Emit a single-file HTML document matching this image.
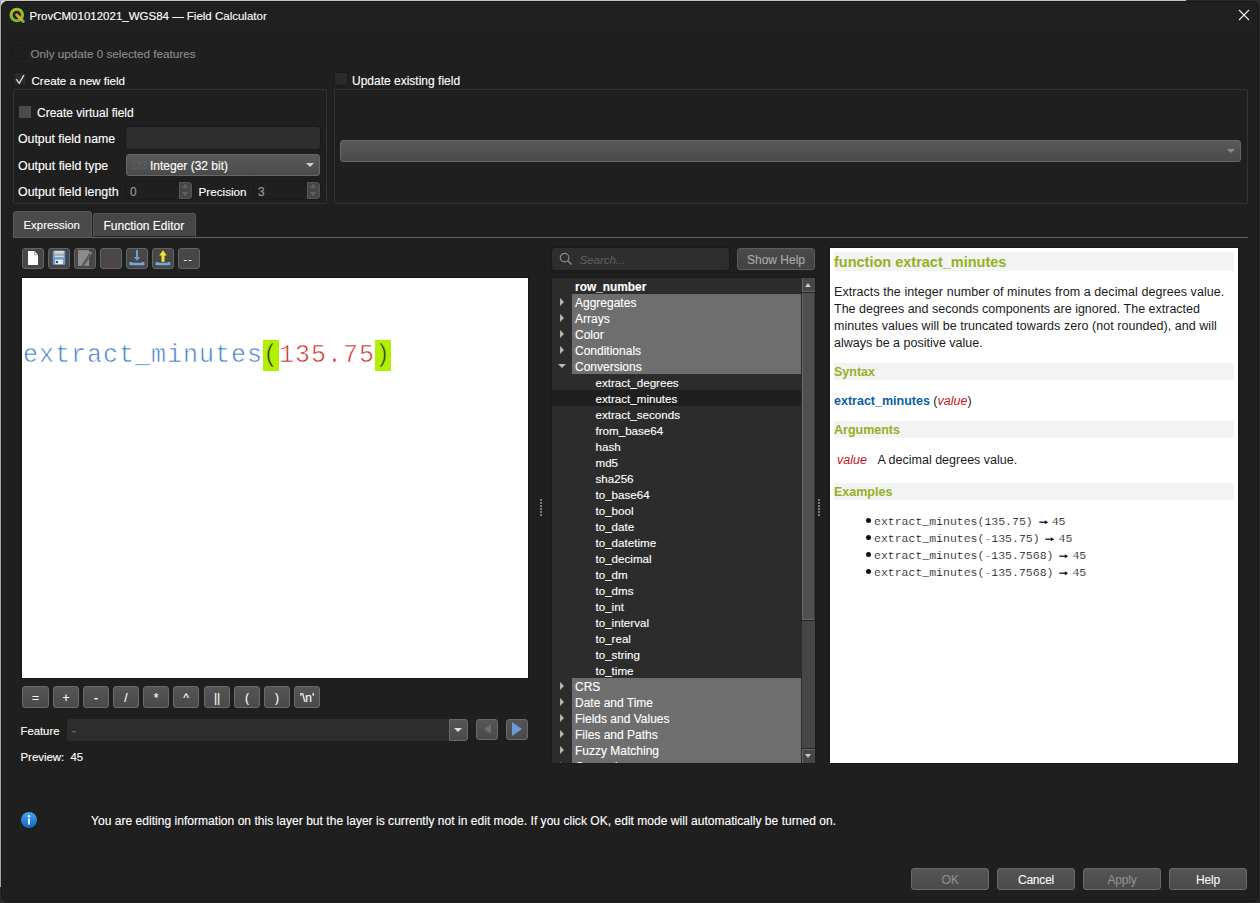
<!DOCTYPE html><html><head><meta charset="utf-8"><style>*{box-sizing:border-box;margin:0;padding:0}
html,body{width:1260px;height:903px;overflow:hidden;background:#2a2a2a}
body{position:relative;font-family:"Liberation Sans",sans-serif;font-size:12px;color:#fff}
.a{position:absolute}
.t{position:absolute;white-space:pre;line-height:16px;height:16px;-webkit-text-stroke-width:0.12px}
#win{position:absolute;left:1px;top:1px;width:1258px;height:901px;background:#1f1f1f;border-radius:7px;box-shadow:inset 0 0 0 1px #171717}
.cb{position:absolute;width:12px;height:12px;background:#2a2a2a;box-shadow:0 0 0 1px #1a1a1a}
.grp{position:absolute;border:1px solid #333;border-radius:2px}
.inp{position:absolute;background:#2e2e2e;border-radius:3px;box-shadow:0 0 0 1px #1a1a1a}
.combo{position:absolute;background:linear-gradient(#5a5a5a,#4a4a4a);border:1px solid #666;border-radius:3px}
.btn{position:absolute;background:linear-gradient(#555,#4a4a4a);border:1px solid #6a6a6a;border-radius:3px;text-align:center;color:#fff;white-space:pre;-webkit-text-stroke-width:0.12px}
.tb{position:absolute;top:248px;width:22px;height:21px;background:#474747;border:1px solid #646464;border-radius:3px}
.ht{position:absolute;white-space:pre;font-size:12.5px;line-height:17px;height:17px;color:#1a1a1a}
.hh{position:absolute;left:834px;width:400px;background:#f3f3f3}
.code{font-family:"Liberation Mono",monospace}
</style></head><body>
<div class="a" style="left:0;top:0;width:14px;height:14px;background:#cfcfcf"></div>
<div id="win"></div>
<div class="a" style="left:8px;top:2px;width:1244px;height:29px;background:#202020"></div>
<div class="a" style="left:0;top:0;width:1186px;height:1px;background:#c4c4c4"></div>
<div class="a" style="left:0;top:0;width:1px;height:887px;background:#a6a6a6"></div>
<svg class="a" style="left:0px;top:0px" width="30" height="30" viewBox="0 0 30 30"><defs><linearGradient id="lg1" x1="16" y1="14.4" x2="24" y2="22.4" gradientUnits="userSpaceOnUse"><stop offset="0" stop-color="#f7801c"/><stop offset="0.4" stop-color="#d9b23a"/><stop offset="1" stop-color="#68b03c"/></linearGradient><linearGradient id="lg2" x1="0" y1="0" x2="0" y2="1"><stop offset="0" stop-color="#9cc426"/><stop offset="1" stop-color="#7db32a"/></linearGradient></defs><circle cx="16.8" cy="15" r="5.7" fill="none" stroke="url(#lg2)" stroke-width="3.1"/><path d="M16.6 14.8L23.2 21.4" stroke="url(#lg1)" stroke-width="3" stroke-linecap="round"/></svg>

<div class="t" style="left:29.6px;top:8px;font-size:11.5px;color:#fff">ProvCM01012021_WGS84 — Field Calculator</div>
<svg class="a" style="left:1238px;top:9px" width="12" height="12" viewBox="0 0 12 12"><path d="M1 1L11 11M11 1L1 11" stroke="#f0f0f0" stroke-width="1.1"/></svg>
<div class="cb" style="left:13px;top:46px;background:#1f1f1f;box-shadow:0 0 0 1px #191919"></div>
<div class="t" style="left:30.5px;top:46px;color:#8c8c8c;font-size:11.7px">Only update 0 selected features</div>
<div class="cb" style="left:14px;top:73px"></div>
<svg class="a" style="left:14px;top:73px" width="12" height="12" viewBox="0 0 12 12"><path d="M2.3 6.2L5.2 10.3L9.9 2.2" fill="none" stroke="#dcdcdc" stroke-width="1.3"/></svg>
<div class="t" style="left:31.5px;top:73px;font-size:11.6px">Create a new field</div>
<div class="cb" style="left:335px;top:73px"></div>
<div class="t" style="left:352px;top:73px;">Update existing field</div>
<div class="grp" style="left:13px;top:89px;width:314px;height:115px"></div>
<div class="grp" style="left:334px;top:89px;width:914px;height:115px"></div>
<div class="cb" style="left:19px;top:106px;background:#4a4a4a;box-shadow:none"></div>
<div class="t" style="left:37px;top:105px;">Create virtual field</div>
<div class="t" style="left:18px;top:131px;font-size:12.3px">Output field name</div>
<div class="t" style="left:18px;top:158px;font-size:12.4px">Output field type</div>
<div class="t" style="left:18px;top:184px;font-size:12.4px">Output field length</div>
<div class="inp" style="left:126px;top:127px;width:194px;height:22px"></div>
<div class="combo" style="left:126px;top:154px;width:194px;height:22px"></div>
<div class="t" style="left:131px;top:157.5px;font-size:10px;color:#606060;letter-spacing:-0.2px">123</div>
<div class="t" style="left:150px;top:158px;">Integer (32 bit)</div>
<div class="a" style="left:305.5px;top:163px;width:0;height:0;border-left:4px solid transparent;border-right:4px solid transparent;border-top:4px solid #d0d0d0"></div>
<div class="inp" style="left:126px;top:182px;width:66px;height:17px;background:#1f1f1f"></div>
<div class="a" style="left:179px;top:182px;width:13px;height:17px;background:#474747;border:1px solid #565656;border-radius:0 3px 3px 0"></div>
<div class="a" style="left:182px;top:184px;width:0;height:0;border-left:3.5px solid transparent;border-right:3.5px solid transparent;border-bottom:4px solid #626262"></div>
<div class="a" style="left:182px;top:192px;width:0;height:0;border-left:3.5px solid transparent;border-right:3.5px solid transparent;border-top:4px solid #626262"></div>
<div class="t" style="left:130px;top:184px;color:#9a9a9a">0</div>
<div class="inp" style="left:254px;top:182px;width:66px;height:17px;background:#1f1f1f"></div>
<div class="a" style="left:307px;top:182px;width:13px;height:17px;background:#474747;border:1px solid #565656;border-radius:0 3px 3px 0"></div>
<div class="a" style="left:310px;top:184px;width:0;height:0;border-left:3.5px solid transparent;border-right:3.5px solid transparent;border-bottom:4px solid #626262"></div>
<div class="a" style="left:310px;top:192px;width:0;height:0;border-left:3.5px solid transparent;border-right:3.5px solid transparent;border-top:4px solid #626262"></div>
<div class="t" style="left:258px;top:184px;color:#9a9a9a">3</div>
<div class="t" style="left:198.5px;top:184px;font-size:11.7px">Precision</div>
<div class="combo" style="left:340px;top:140px;width:901px;height:22px"></div>
<div class="a" style="left:1226.5px;top:149px;width:0;height:0;border-left:4px solid transparent;border-right:4px solid transparent;border-top:4px solid #8a8a8a"></div>
<div class="a" style="left:13px;top:237px;width:1235px;height:1px;background:#646464"></div>
<div class="a" style="left:13px;top:211px;width:79px;height:27px;background:#4a4a4a;border:1px solid #5a5a5a;border-radius:3px 3px 1px 1px"></div>
<div class="a" style="left:93px;top:213px;width:103px;height:24px;background:#464646;border:1px solid #555;border-bottom:1px solid #222;border-radius:3px 3px 0 0"></div>
<div class="t" style="left:23.5px;top:217px;font-size:11.4px">Expression</div>
<div class="t" style="left:103.5px;top:218px;">Function Editor</div>
<div class="tb" style="left:22px"></div>
<div class="tb" style="left:48px"></div>
<div class="tb" style="left:74px"></div>
<div class="tb" style="left:100px"></div>
<div class="tb" style="left:126px"></div>
<div class="tb" style="left:152px"></div>
<div class="tb" style="left:178px"></div>
<svg class="a" style="left:22px;top:248px" width="180" height="22" viewBox="0 0 180 22">
<path d="M6 3H12.4L16 6.8V17H6Z" fill="#fbfbfb"/><path d="M12.4 3.3V6.8H15.8" fill="#d0d0d0" stroke="#9a9a9a" stroke-width="0.6"/>
<rect x="30.8" y="2.7" width="12.4" height="14.1" rx="0.6" fill="#6b9bd5"/>
<rect x="32.5" y="2.9" width="9.2" height="6.2" fill="#b0b0b0"/><rect x="32.5" y="2.9" width="9.2" height="2.5" fill="#d6d6d6"/><rect x="32.5" y="8.3" width="9.2" height="0.8" fill="#e8e8e8"/>
<rect x="33.1" y="11.6" width="7.8" height="4.6" fill="#eeeeee"/><rect x="33.9" y="13" width="2.1" height="2.1" fill="#264a78"/>
<rect x="56" y="2.1" width="11.1" height="15.7" fill="#8c8c8c"/>
<path d="M61.2 17.2L68.6 5.2" stroke="#5e5e58" stroke-width="2.8" stroke-linecap="round"/><path d="M67.2 4.2L69.6 5.6" stroke="#a0a09a" stroke-width="1.2"/>
<path d="M83.8 5.8H93.8M84.8 7.4H93V16.8H84.8ZM87.1 9V15.5M89 9V15.5M90.9 9V15.5M86.5 5.8L87.5 3.6H90.3L91.2 5.8" fill="none" stroke="#5e4242" stroke-width="0.9"/>
<path d="M115 2.2V9.5" stroke="#6e9fd4" stroke-width="2"/><path d="M111.8 9L115 12.7L118.2 9Z" fill="#6e9fd4"/>
<path d="M107.4 13.9H110.3V14.8H119.5V13.9H122.4V17.2H107.4Z" fill="#78a5d8"/>
<path d="M141 6.5V13.8" stroke="#efe82c" stroke-width="3"/><path d="M137.2 7.4L141 2.3L144.8 7.4Z" fill="#efe82c"/>
<path d="M133.6 13.9H136.5V14.8H145.5V13.9H148.4V17.2H133.6Z" fill="#78a5d8"/>
<path d="M161.8 12.5H164.8M166.6 12.5H169.6" stroke="#f0f0f0" stroke-width="1.2"/>
</svg>

<div class="a" style="left:22px;top:278px;width:506px;height:400px;background:#fff;box-shadow:0 0 0 1px #151515"></div>
<div class="a" style="left:262.5px;top:340px;width:16px;height:31px;background:#b1f000"></div>
<div class="a" style="left:374.5px;top:340px;width:16px;height:31px;background:#b1f000"></div>
<div class="t code" style="left:23px;top:340px;font-size:25px;letter-spacing:1px;line-height:31px;height:31px"><span style="color:#3f7cc4;-webkit-text-stroke:0.6px #fff">extract_minutes</span><span style="color:#333;-webkit-text-stroke:0.6px #b1f000">(</span><span style="color:#cc2a2a;-webkit-text-stroke:0.6px #fff">135.75</span><span style="color:#333;-webkit-text-stroke:0.6px #b1f000">)</span></div>
<div class="btn" style="left:22px;top:686px;width:27px;height:22px;line-height:22px">=</div>
<div class="btn" style="left:53px;top:686px;width:26px;height:22px;line-height:22px">+</div>
<div class="btn" style="left:83px;top:686px;width:26px;height:22px;line-height:22px">-</div>
<div class="btn" style="left:113px;top:686px;width:26px;height:22px;line-height:22px">/</div>
<div class="btn" style="left:143px;top:686px;width:26px;height:22px;line-height:22px">*</div>
<div class="btn" style="left:173px;top:686px;width:26px;height:22px;line-height:22px">^</div>
<div class="btn" style="left:204px;top:686px;width:26px;height:22px;line-height:22px">||</div>
<div class="btn" style="left:234px;top:686px;width:26px;height:22px;line-height:22px">(</div>
<div class="btn" style="left:264px;top:686px;width:26px;height:22px;line-height:22px">)</div>
<div class="btn" style="left:294px;top:686px;width:26px;height:22px;line-height:22px">'\n'</div>
<div class="t" style="left:20.5px;top:723px;font-size:11.3px">Feature</div>
<div class="a" style="left:67px;top:719px;width:382px;height:22px;background:#2d2d2d;border-radius:3px 0 0 3px"></div>
<div class="t" style="left:72px;top:723px;color:#777">-</div>
<div class="btn" style="left:449px;top:719px;width:19px;height:22px;border-radius:0 3px 3px 0"></div>
<div class="a" style="left:454px;top:728px;width:0;height:0;border-left:4px solid transparent;border-right:4px solid transparent;border-top:4px solid #e0e0e0"></div>
<div class="btn" style="left:476px;top:719px;width:22px;height:21px"></div>
<div class="a" style="left:484px;top:724px;width:0;height:0;border-top:5.5px solid transparent;border-bottom:5.5px solid transparent;border-right:7px solid #6b6e72"></div>
<div class="btn" style="left:506px;top:719px;width:22px;height:21px"></div>
<div class="a" style="left:512px;top:722px;width:0;height:0;border-top:7px solid transparent;border-bottom:7px solid transparent;border-left:10px solid #6a9bd6"></div>
<div class="t" style="left:20.5px;top:749px;font-size:11.4px">Preview:  45</div>
<div class="a" style="left:540px;top:499px;width:2px;height:2px;background:#7a7a7a"></div>
<div class="a" style="left:540px;top:502px;width:2px;height:2px;background:#7a7a7a"></div>
<div class="a" style="left:540px;top:505px;width:2px;height:2px;background:#7a7a7a"></div>
<div class="a" style="left:540px;top:508px;width:2px;height:2px;background:#7a7a7a"></div>
<div class="a" style="left:540px;top:511px;width:2px;height:2px;background:#7a7a7a"></div>
<div class="a" style="left:540px;top:514px;width:2px;height:2px;background:#7a7a7a"></div>
<div class="a" style="left:818px;top:499px;width:2px;height:2px;background:#7a7a7a"></div>
<div class="a" style="left:818px;top:502px;width:2px;height:2px;background:#7a7a7a"></div>
<div class="a" style="left:818px;top:505px;width:2px;height:2px;background:#7a7a7a"></div>
<div class="a" style="left:818px;top:508px;width:2px;height:2px;background:#7a7a7a"></div>
<div class="a" style="left:818px;top:511px;width:2px;height:2px;background:#7a7a7a"></div>
<div class="a" style="left:818px;top:514px;width:2px;height:2px;background:#7a7a7a"></div>
<div class="inp" style="left:552px;top:248px;width:177px;height:22px"></div>
<svg class="a" style="left:559px;top:252px" width="14" height="14" viewBox="0 0 14 14"><circle cx="5.6" cy="5.6" r="4.3" fill="none" stroke="#8a8a8a" stroke-width="1.2"/><path d="M8.7 8.7L12.6 12.6" stroke="#8a8a8a" stroke-width="1.4"/></svg>
<div class="t" style="left:579.5px;top:251.5px;font-style:italic;color:#5e5e5e;font-size:11.5px">Search...</div>
<div class="btn" style="left:737px;top:248px;width:78px;height:22px;line-height:23px;color:#a9a9a9;background:linear-gradient(#4a4a4a,#424242);border-color:#5c5c5c">Show Help</div>
<div class="a" style="left:552px;top:278px;width:263px;height:485px;background:#2c2c2c;overflow:hidden;box-shadow:0 0 0 1px #1a1a1a">
<div class="t" style="left:23px;top:1px;font-weight:bold;color:#fff;font-size:11.9px">row_number</div>
<div class="a" style="left:20px;top:16px;width:229px;height:16px;background:#6e6e6e"></div>
<div class="a" style="left:8px;top:20px;width:0;height:0;border-top:4px solid transparent;border-bottom:4px solid transparent;border-left:4px solid #b8b8b8"></div>
<div class="t" style="left:23px;top:17px;color:#fff;font-size:12px">Aggregates</div>
<div class="a" style="left:20px;top:32px;width:229px;height:16px;background:#6e6e6e"></div>
<div class="a" style="left:8px;top:36px;width:0;height:0;border-top:4px solid transparent;border-bottom:4px solid transparent;border-left:4px solid #b8b8b8"></div>
<div class="t" style="left:23px;top:33px;color:#fff;font-size:12px">Arrays</div>
<div class="a" style="left:20px;top:48px;width:229px;height:16px;background:#6e6e6e"></div>
<div class="a" style="left:8px;top:52px;width:0;height:0;border-top:4px solid transparent;border-bottom:4px solid transparent;border-left:4px solid #b8b8b8"></div>
<div class="t" style="left:23px;top:49px;color:#fff;font-size:12px">Color</div>
<div class="a" style="left:20px;top:64px;width:229px;height:16px;background:#6e6e6e"></div>
<div class="a" style="left:8px;top:68px;width:0;height:0;border-top:4px solid transparent;border-bottom:4px solid transparent;border-left:4px solid #b8b8b8"></div>
<div class="t" style="left:23px;top:65px;color:#fff;font-size:12px">Conditionals</div>
<div class="a" style="left:20px;top:80px;width:229px;height:16px;background:#6e6e6e"></div>
<div class="a" style="left:6px;top:86px;width:0;height:0;border-left:4px solid transparent;border-right:4px solid transparent;border-top:4px solid #b8b8b8"></div>
<div class="t" style="left:23px;top:81px;color:#fff;font-size:12px">Conversions</div>
<div class="t" style="left:43.5px;top:97px;color:#fff;font-size:11.6px">extract_degrees</div>
<div class="a" style="left:0;top:112px;width:249px;height:16px;background:#1f1f1f"></div>
<div class="t" style="left:43.5px;top:113px;color:#fff;font-size:11.6px">extract_minutes</div>
<div class="t" style="left:43.5px;top:129px;color:#fff;font-size:11.6px">extract_seconds</div>
<div class="t" style="left:43.5px;top:145px;color:#fff;font-size:11.6px">from_base64</div>
<div class="t" style="left:43.5px;top:161px;color:#fff;font-size:11.6px">hash</div>
<div class="t" style="left:43.5px;top:177px;color:#fff;font-size:11.6px">md5</div>
<div class="t" style="left:43.5px;top:193px;color:#fff;font-size:11.6px">sha256</div>
<div class="t" style="left:43.5px;top:209px;color:#fff;font-size:11.6px">to_base64</div>
<div class="t" style="left:43.5px;top:225px;color:#fff;font-size:11.6px">to_bool</div>
<div class="t" style="left:43.5px;top:241px;color:#fff;font-size:11.6px">to_date</div>
<div class="t" style="left:43.5px;top:257px;color:#fff;font-size:11.6px">to_datetime</div>
<div class="t" style="left:43.5px;top:273px;color:#fff;font-size:11.6px">to_decimal</div>
<div class="t" style="left:43.5px;top:289px;color:#fff;font-size:11.6px">to_dm</div>
<div class="t" style="left:43.5px;top:305px;color:#fff;font-size:11.6px">to_dms</div>
<div class="t" style="left:43.5px;top:321px;color:#fff;font-size:11.6px">to_int</div>
<div class="t" style="left:43.5px;top:337px;color:#fff;font-size:11.6px">to_interval</div>
<div class="t" style="left:43.5px;top:353px;color:#fff;font-size:11.6px">to_real</div>
<div class="t" style="left:43.5px;top:369px;color:#fff;font-size:11.6px">to_string</div>
<div class="t" style="left:43.5px;top:385px;color:#fff;font-size:11.6px">to_time</div>
<div class="a" style="left:20px;top:400px;width:229px;height:16px;background:#6e6e6e"></div>
<div class="a" style="left:8px;top:404px;width:0;height:0;border-top:4px solid transparent;border-bottom:4px solid transparent;border-left:4px solid #b8b8b8"></div>
<div class="t" style="left:23px;top:401px;color:#fff;font-size:12px">CRS</div>
<div class="a" style="left:20px;top:416px;width:229px;height:16px;background:#6e6e6e"></div>
<div class="a" style="left:8px;top:420px;width:0;height:0;border-top:4px solid transparent;border-bottom:4px solid transparent;border-left:4px solid #b8b8b8"></div>
<div class="t" style="left:23px;top:417px;color:#fff;font-size:12px">Date and Time</div>
<div class="a" style="left:20px;top:432px;width:229px;height:16px;background:#6e6e6e"></div>
<div class="a" style="left:8px;top:436px;width:0;height:0;border-top:4px solid transparent;border-bottom:4px solid transparent;border-left:4px solid #b8b8b8"></div>
<div class="t" style="left:23px;top:433px;color:#fff;font-size:12px">Fields and Values</div>
<div class="a" style="left:20px;top:448px;width:229px;height:16px;background:#6e6e6e"></div>
<div class="a" style="left:8px;top:452px;width:0;height:0;border-top:4px solid transparent;border-bottom:4px solid transparent;border-left:4px solid #b8b8b8"></div>
<div class="t" style="left:23px;top:449px;color:#fff;font-size:12px">Files and Paths</div>
<div class="a" style="left:20px;top:464px;width:229px;height:16px;background:#6e6e6e"></div>
<div class="a" style="left:8px;top:468px;width:0;height:0;border-top:4px solid transparent;border-bottom:4px solid transparent;border-left:4px solid #b8b8b8"></div>
<div class="t" style="left:23px;top:465px;color:#fff;font-size:12px">Fuzzy Matching</div>
<div class="a" style="left:20px;top:480px;width:229px;height:16px;background:#6e6e6e"></div>
<div class="a" style="left:8px;top:484px;width:0;height:0;border-top:4px solid transparent;border-bottom:4px solid transparent;border-left:4px solid #b8b8b8"></div>
<div class="t" style="left:23px;top:481px;color:#fff;font-size:12px">General</div>
<div class="a" style="left:250px;top:0;width:13px;height:485px;background:#464646"></div>
<div class="a" style="left:250px;top:0;width:13px;height:14px;background:#474747;border-left:1px solid #666;border-bottom:1px solid #666"></div>
<div class="a" style="left:250px;top:14px;width:13px;height:1px;background:#242424"></div>
<div class="a" style="left:252.8px;top:4.5px;width:0;height:0;border-left:3.8px solid transparent;border-right:3.8px solid transparent;border-bottom:4.3px solid #c8c8c8"></div>
<div class="a" style="left:250px;top:15px;width:13px;height:327px;background:#4f4f4f;border-left:1px solid #686868;border-bottom:1px solid #686868;border-right:1px solid #3c3c3c"></div>
<div class="a" style="left:250px;top:342px;width:13px;height:1px;background:#242424"></div>
<div class="a" style="left:250px;top:470px;width:13px;height:1px;background:#242424"></div>
<div class="a" style="left:250px;top:471px;width:13px;height:14px;background:#474747;border-left:1px solid #666;border-top:1px solid #666"></div>
<div class="a" style="left:252.8px;top:476px;width:0;height:0;border-left:3.8px solid transparent;border-right:3.8px solid transparent;border-top:4.3px solid #c8c8c8"></div>
</div>
<div class="a" style="left:830px;top:248px;width:408px;height:515px;background:#fff;box-shadow:0 0 0 1px #151515"></div>
<div class="hh" style="top:252px;height:19px"></div>
<div class="t" style="left:834px;top:253px;font-weight:bold;font-size:14.5px;line-height:19px;height:19px;color:#93b023;-webkit-text-stroke-width:0">function extract_minutes</div>
<div class="ht" style="left:834px;top:284px;letter-spacing:0.07px">Extracts the integer number of minutes from a decimal degrees value.</div>
<div class="ht" style="left:834px;top:301px;letter-spacing:0px">The degrees and seconds components are ignored. The extracted</div>
<div class="ht" style="left:834px;top:318px;letter-spacing:0.05px">minutes values will be truncated towards zero (not rounded), and will</div>
<div class="ht" style="left:834px;top:335px;letter-spacing:0px">always be a positive value.</div>
<div class="hh" style="top:363px;height:17px"></div>
<div class="ht" style="left:834px;top:364px;font-weight:bold;color:#93b023">Syntax</div>
<div class="hh" style="top:421px;height:17px"></div>
<div class="ht" style="left:834px;top:422px;font-weight:bold;color:#93b023">Arguments</div>
<div class="hh" style="top:483px;height:17px"></div>
<div class="ht" style="left:834px;top:484px;font-weight:bold;color:#93b023">Examples</div>
<div class="ht" style="left:834px;top:393px"><b style="color:#0b5fa5">extract_minutes</b> <span style="color:#222">(</span><i style="color:#c0141c">value</i><span style="color:#222">)</span></div>
<div class="ht" style="left:837px;top:451.5px;font-style:italic;color:#c0141c">value</div>
<div class="ht" style="left:877.5px;top:451.5px">A decimal degrees value.</div>
<div class="a" style="left:866px;top:518px;width:5px;height:5px;border-radius:50%;background:#111"></div>
<div class="t code" style="left:874px;top:513px;font-size:11.5px;line-height:17px;height:17px;color:#111;-webkit-text-stroke:0.15px #fff">extract_minutes(135.75)</div>
<svg class="a" style="left:1038.5px;top:519px" width="10" height="6" viewBox="0 0 10 6"><path d="M0.3 3.2H6.5" stroke="#111" stroke-width="1.3"/><path d="M5.8 1.2L9.2 3.2L5.8 5.2Z" fill="#111"/></svg>
<div class="t code" style="left:1051.7px;top:513px;font-size:11.5px;line-height:17px;height:17px;color:#111;-webkit-text-stroke:0.15px #fff">45</div>
<div class="a" style="left:866px;top:535px;width:5px;height:5px;border-radius:50%;background:#111"></div>
<div class="t code" style="left:874px;top:530px;font-size:11.5px;line-height:17px;height:17px;color:#111;-webkit-text-stroke:0.15px #fff">extract_minutes(-135.75)</div>
<svg class="a" style="left:1045.4px;top:536px" width="10" height="6" viewBox="0 0 10 6"><path d="M0.3 3.2H6.5" stroke="#111" stroke-width="1.3"/><path d="M5.8 1.2L9.2 3.2L5.8 5.2Z" fill="#111"/></svg>
<div class="t code" style="left:1058.6px;top:530px;font-size:11.5px;line-height:17px;height:17px;color:#111;-webkit-text-stroke:0.15px #fff">45</div>
<div class="a" style="left:866px;top:552px;width:5px;height:5px;border-radius:50%;background:#111"></div>
<div class="t code" style="left:874px;top:547px;font-size:11.5px;line-height:17px;height:17px;color:#111;-webkit-text-stroke:0.15px #fff">extract_minutes(-135.7568)</div>
<svg class="a" style="left:1059.2px;top:553px" width="10" height="6" viewBox="0 0 10 6"><path d="M0.3 3.2H6.5" stroke="#111" stroke-width="1.3"/><path d="M5.8 1.2L9.2 3.2L5.8 5.2Z" fill="#111"/></svg>
<div class="t code" style="left:1072.4px;top:547px;font-size:11.5px;line-height:17px;height:17px;color:#111;-webkit-text-stroke:0.15px #fff">45</div>
<div class="a" style="left:866px;top:569px;width:5px;height:5px;border-radius:50%;background:#111"></div>
<div class="t code" style="left:874px;top:564px;font-size:11.5px;line-height:17px;height:17px;color:#111;-webkit-text-stroke:0.15px #fff">extract_minutes(-135.7568)</div>
<svg class="a" style="left:1059.2px;top:570px" width="10" height="6" viewBox="0 0 10 6"><path d="M0.3 3.2H6.5" stroke="#111" stroke-width="1.3"/><path d="M5.8 1.2L9.2 3.2L5.8 5.2Z" fill="#111"/></svg>
<div class="t code" style="left:1072.4px;top:564px;font-size:11.5px;line-height:17px;height:17px;color:#111;-webkit-text-stroke:0.15px #fff">45</div>
<svg class="a" style="left:21px;top:812px" width="16" height="16" viewBox="0 0 16 16"><defs><linearGradient id="ig" x1="0" y1="0" x2="0" y2="1"><stop offset="0" stop-color="#42a5f5"/><stop offset="1" stop-color="#1565c0"/></linearGradient></defs><circle cx="8" cy="8" r="8" fill="url(#ig)"/><rect x="7" y="6.5" width="2" height="6" fill="#fff"/><circle cx="8" cy="4.3" r="1.2" fill="#fff"/></svg>
<div class="t" style="left:91px;top:813px;letter-spacing:0.035px">You are editing information on this layer but the layer is currently not in edit mode. If you click OK, edit mode will automatically be turned on.</div>
<div class="btn" style="left:911px;top:868px;width:78px;height:22px;line-height:22px;letter-spacing:-0.2px;color:#8f8f8f">OK</div>
<div class="btn" style="left:997px;top:868px;width:78px;height:22px;line-height:22px;letter-spacing:-0.2px;color:#f5f5f5">Cancel</div>
<div class="btn" style="left:1083px;top:868px;width:78px;height:22px;line-height:22px;letter-spacing:-0.2px;color:#8f8f8f">Apply</div>
<div class="btn" style="left:1169px;top:868px;width:78px;height:22px;line-height:22px;letter-spacing:-0.2px;color:#f5f5f5">Help</div>
</body></html>
